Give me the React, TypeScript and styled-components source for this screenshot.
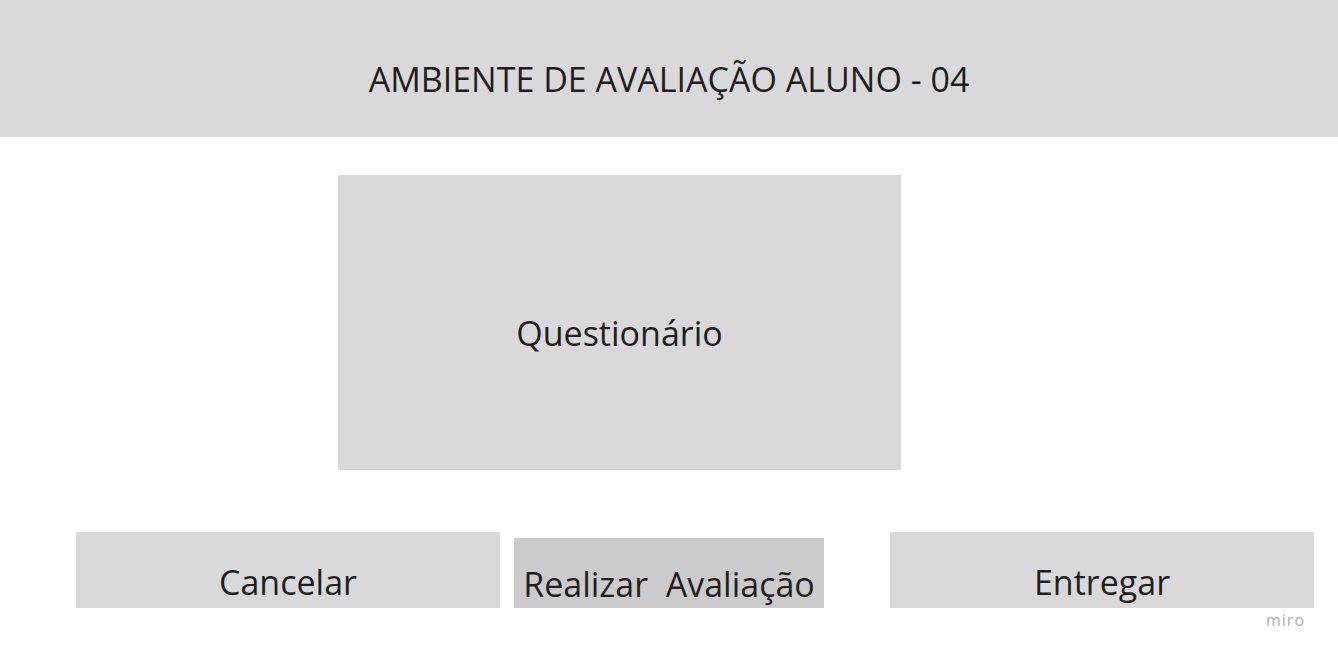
import React from "react";
import styled, { createGlobalStyle } from "styled-components";

const Global = createGlobalStyle`
  html, body { margin: 0; padding: 0; background: #ffffff; }
  body { font-family: "Open Sans", "Noto Sans", sans-serif; color: #1e1e1e; }
`;

const Page = styled.div`
  width: 1338px;
  height: 656px;
  display: flex;
  flex-direction: column;
  overflow: hidden;
`;

const Header = styled.header`
  height: 137px;
  box-sizing: border-box;
  background: #d9d9d9;
  display: flex;
  justify-content: center;
  padding-top: 56px;
  font-size: 34px;
  line-height: 46px;
`;

const Main = styled.div`
  display: flex;
  padding: 38px 0 0 338px;
`;

const Board = styled.div`
  width: 563px;
  height: 295px;
  box-sizing: border-box;
  background: #d9d9d9;
  display: flex;
  justify-content: center;
  padding-top: 135px;
  font-size: 34px;
  line-height: 46px;
`;

const Actions = styled.div`
  display: flex;
  align-items: flex-end;
  padding: 62px 0 0 76px;
`;

const Action = styled.div<{ $w: number; $h: number; $bg: string; $pt: number; $ml: number }>`
  width: ${(p) => p.$w}px;
  height: ${(p) => p.$h}px;
  margin-left: ${(p) => p.$ml}px;
  box-sizing: border-box;
  background: ${(p) => p.$bg};
  display: flex;
  justify-content: center;
  padding-top: ${(p) => p.$pt}px;
  font-size: 34px;
  line-height: 46px;
  white-space: pre;
`;

const Footer = styled.div`
  display: flex;
  justify-content: flex-end;
  padding: 1px 33px 0 0;
`;

const Miro = styled.span`
  font-size: 16px;
  line-height: 22px;
  letter-spacing: 1px;
  color: #b0b0b0;
`;

export default function App() {
  return (
    <Page>
      <Global />
      <Header>AMBIENTE DE AVALIAÇÃO ALUNO - 04</Header>
      <Main>
        <Board>Questionário</Board>
      </Main>
      <Actions>
        <Action $w={424} $h={76} $bg="#d9d9d9" $pt={27} $ml={0}>Cancelar</Action>
        <Action $w={310} $h={70} $bg="#cbcbcb" $pt={23} $ml={14}>{"Realizar  Avaliação"}</Action>
        <Action $w={424} $h={76} $bg="#d9d9d9" $pt={27} $ml={66}>Entregar</Action>
      </Actions>
      <Footer>
        <Miro>miro</Miro>
      </Footer>
    </Page>
  );
}
